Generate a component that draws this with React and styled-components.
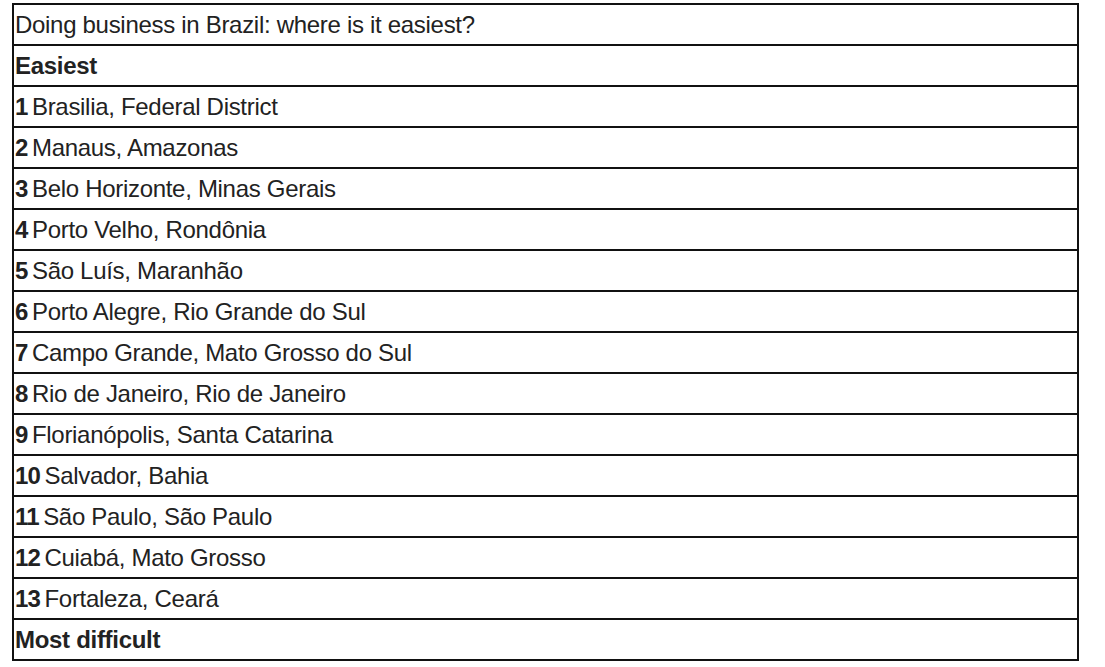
import React from 'react'
import styled, { createGlobalStyle } from 'styled-components'

const GlobalStyle = createGlobalStyle`
  body {
    margin: 0;
    background: #ffffff;
    font-family: "Liberation Sans", Arial, sans-serif;
  }
`

const Page = styled.div`
  padding: 3px 0 0 12px;
`

const Table = styled.table`
  width: 1067px;
  border-collapse: collapse;
  border: 2px solid #111;
`

const Cell = styled.td`
  height: 39px;
  padding: 0 0 0 1px;
  border: 2px solid #111;
  font-size: 24px;
  line-height: 26px;
  letter-spacing: -0.3px;
  color: #222;
  font-weight: ${props => (props.bold ? 700 : 400)};
  vertical-align: middle;
`

const Rank = styled.b`
  font-weight: 700;
  letter-spacing: -0.8px;
  margin-right: -2px;
`

const cities = [
  'Brasilia, Federal District',
  'Manaus, Amazonas',
  'Belo Horizonte, Minas Gerais',
  'Porto Velho, Rondônia',
  'São Luís, Maranhão',
  'Porto Alegre, Rio Grande do Sul',
  'Campo Grande, Mato Grosso do Sul',
  'Rio de Janeiro, Rio de Janeiro',
  'Florianópolis, Santa Catarina',
  'Salvador, Bahia',
  'São Paulo, São Paulo',
  'Cuiabá, Mato Grosso',
  'Fortaleza, Ceará',
]

function App() {
  return (
    <React.Fragment>
      <GlobalStyle />
      <Page>
        <Table>
          <tbody>
            <tr>
              <Cell>Doing business in Brazil: where is it easiest?</Cell>
            </tr>
            <tr>
              <Cell bold>Easiest</Cell>
            </tr>
            {cities.map((city, i) => (
              <tr key={city}>
                <Cell>
                  <Rank>{i + 1}</Rank> {city}
                </Cell>
              </tr>
            ))}
            <tr>
              <Cell bold>Most difficult</Cell>
            </tr>
          </tbody>
        </Table>
      </Page>
    </React.Fragment>
  )
}

export default App
